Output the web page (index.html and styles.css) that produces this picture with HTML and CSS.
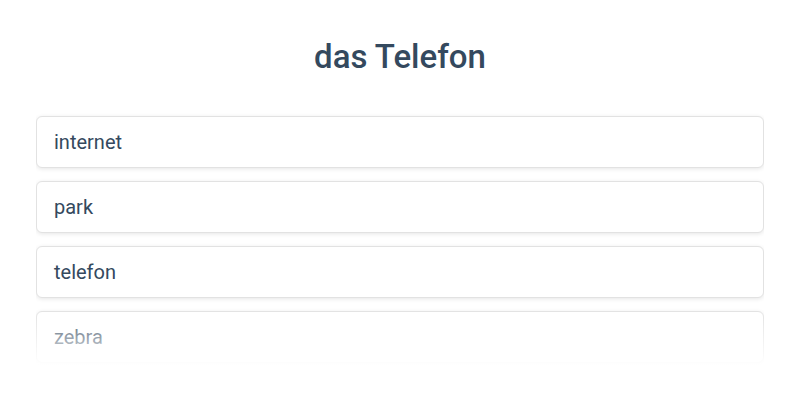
FILE: index.html
```html
<!DOCTYPE html>
<html lang="de">
<head>
    <meta charset="UTF-8">
    <meta name="viewport" content="width=device-width, initial-scale=1.0">
    <title>das Telefon</title>
    <link rel="stylesheet" href="styles.css">
</head>
<body>
    <div class="quiz">
        <h1 class="word">das Telefon</h1>
        <div class="options">
            <div class="option">internet</div>
            <div class="option">park</div>
            <div class="option">telefon</div>
            <div class="option">zebra</div>
            <div class="fade"></div>
        </div>
    </div>
</body>
</html>
```

FILE: styles.css
```css
body {
    margin: 0;
    background: #fff;
    font-family: Roboto, "Liberation Sans", sans-serif;
    color: #2c3e50;
}

.quiz {
    padding: 0 36px;
}

.word {
    margin: 0;
    padding-top: 37px;
    height: 78px;
    box-sizing: border-box;
    text-align: center;
    font-size: 33px;
    font-weight: 500;
    line-height: 40px;
    color: #34495e;
}

.options {
    position: relative;
    display: flex;
    flex-direction: column;
    gap: 13px;
    height: 250px;
    padding-top: 38px;
    overflow: hidden;
}

.option {
    flex-shrink: 0;
    height: 52px;
    box-sizing: border-box;
    padding: 0 17px;
    display: flex;
    align-items: center;
    font-size: 20px;
    color: #34495e;
    border: 1px solid #e2e2e2;
    border-radius: 6px;
    box-shadow: 0 1px 4px rgba(0, 0, 0, 0.1);
    background: #fff;
}

/* 最後一個選項往下淡出 */
.fade {
    position: absolute;
    left: -10px;
    right: -10px;
    bottom: 0;
    height: 56px;
    background: linear-gradient(rgba(255, 255, 255, 0), rgba(255, 255, 255, 0.55) 55%, #fff);
}
```
